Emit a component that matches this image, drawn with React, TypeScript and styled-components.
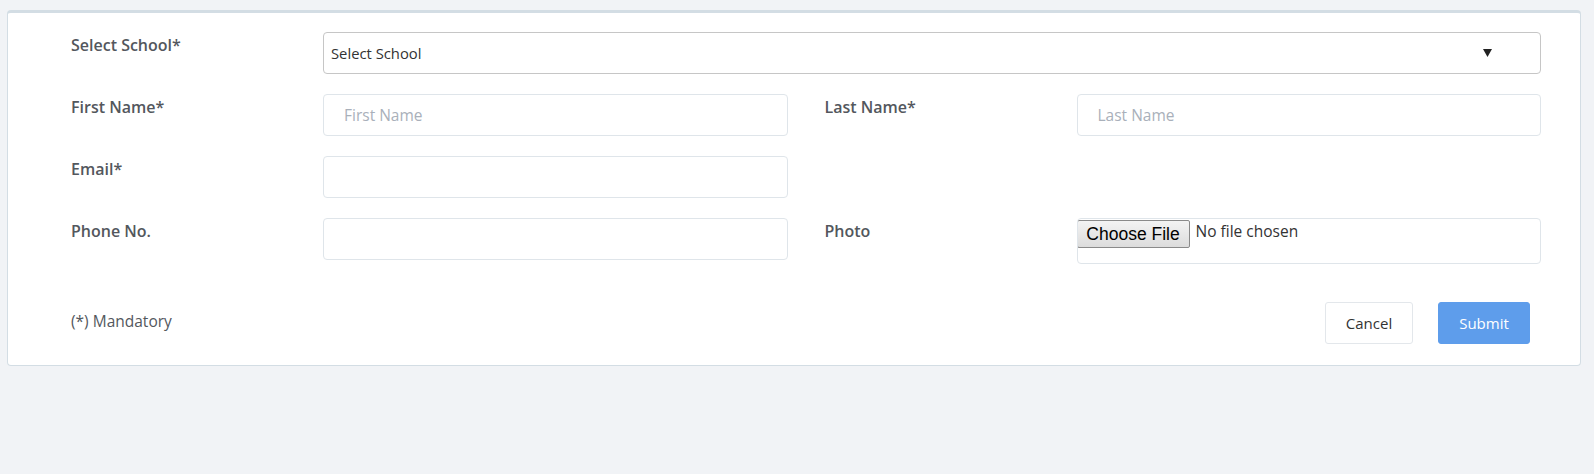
import styled, { createGlobalStyle } from 'styled-components'

const colors = {
  page: '#f1f3f6',
  white: '#ffffff',
  cardEdge: '#d3dde4',
  label: '#53575d',
  text: '#333333',
  field: '#dfe5ea',
  selectEdge: '#c6c6c6',
  placeholder: '#a9b0ba',
  blue: '#5e9deb',
}

const font = "'Open Sans', 'Noto Sans', sans-serif"

const GlobalStyle = createGlobalStyle`
  html, body {
    margin: 0;
    padding: 0;
    background: ${colors.page};
    font-family: ${font};
    height: 474px;
  }
`

const App = () => {
  return (
    <>
      <GlobalStyle />
      <Card>
        <Row>
          <Field $wide>
            <Label>Select School*</Label>
            <SelectWrap>
              <Select defaultValue=''>
                <option value=''>Select School</option>
              </Select>
              <Arrow>
                <svg width='9' height='8' viewBox='0 0 9 8'>
                  <path d='M0 0 H9 L4.5 8 Z' fill='#222' />
                </svg>
              </Arrow>
            </SelectWrap>
          </Field>
        </Row>
        <Row>
          <Field>
            <Label>First Name*</Label>
            <Input placeholder='First Name' />
          </Field>
          <Field>
            <Label>Last Name*</Label>
            <Input placeholder='Last Name' />
          </Field>
        </Row>
        <Row>
          <Field>
            <Label>Email*</Label>
            <Input />
          </Field>
        </Row>
        <Row>
          <Field>
            <Label>Phone No.</Label>
            <Input />
          </Field>
          <Field>
            <Label>Photo</Label>
            <FileInput type='file' />
          </Field>
        </Row>
        <Footer>
          <Note>(*) Mandatory</Note>
          <Actions>
            <Button $width={88}>Cancel</Button>
            <Button $width={92} $primary>
              Submit
            </Button>
          </Actions>
        </Footer>
      </Card>
    </>
  )
}

const Card = styled.div`
  margin: 10px 13px 0 7px;
  background: ${colors.white};
  border: 1px solid ${colors.cardEdge};
  border-top: 3px solid ${colors.cardEdge};
  border-radius: 4px;
  padding: 19px 39px 21px 63px;
`

const Row = styled.div`
  display: grid;
  grid-template-columns: 1fr 1fr;
  column-gap: 37px;
  align-items: start;
  margin-bottom: 20px;
`

const Field = styled.div<{ $wide?: boolean }>`
  display: grid;
  grid-template-columns: 252px 1fr;
  align-items: start;
  grid-column: ${(p) => (p.$wide ? '1 / -1' : 'auto')};
`

const Label = styled.label`
  font-size: 16px;
  font-weight: 600;
  color: ${colors.label};
  line-height: 22px;
  padding-top: 2px;
`

const SelectWrap = styled.div`
  position: relative;
`

const Select = styled.select`
  appearance: none;
  width: 100%;
  height: 42px;
  box-sizing: border-box;
  border: 1px solid ${colors.selectEdge};
  border-radius: 4px;
  background: ${colors.white};
  padding: 0 7px;
  font-family: ${font};
  font-size: 14.8px;
  color: ${colors.text};
  outline: none;
`

const Arrow = styled.span`
  position: absolute;
  top: 17px;
  right: 49px;
  display: flex;
  pointer-events: none;
`

const Input = styled.input`
  width: 100%;
  height: 42px;
  box-sizing: border-box;
  border: 1px solid ${colors.field};
  border-radius: 4px;
  padding: 0 20px;
  font-family: ${font};
  font-size: 15.5px;
  color: ${colors.text};
  outline: none;

  &::placeholder {
    color: ${colors.placeholder};
  }
`

const FileInput = styled.input`
  width: 100%;
  height: 46px;
  box-sizing: border-box;
  border: 1px solid ${colors.field};
  border-radius: 4px;
  padding: 1px 0 0 0;
  font-family: ${font};
  font-size: 15.5px;
  color: ${colors.text};
  display: block;

  &::file-selector-button {
    font-family: 'Liberation Sans', Arial, sans-serif;
    font-size: 17.5px;
    color: #000;
    background: linear-gradient(#f3f3f3, #dcdcdc);
    border: 1px solid #8a8a8a;
    border-radius: 2px;
    width: 113px;
    height: 28px;
    padding: 0;
    margin: 0 6px 0 -1px;
    vertical-align: top;
  }
`

const Footer = styled.div`
  display: flex;
  align-items: center;
  justify-content: space-between;
  margin-top: 38px;
  padding-right: 11px;
`

const Note = styled.span`
  font-size: 15.5px;
  color: ${colors.label};
  margin-top: -4px;
`

const Actions = styled.div`
  display: flex;
  gap: 25px;
`

const Button = styled.button<{ $primary?: boolean; $width: number }>`
  width: ${(p) => p.$width}px;
  height: 42px;
  padding: 0;
  border-radius: 3px;
  font-family: ${font};
  font-size: 15px;
  cursor: pointer;
  border: 1px solid ${(p) => (p.$primary ? colors.blue : '#e3e7eb')};
  background: ${(p) => (p.$primary ? colors.blue : colors.white)};
  color: ${(p) => (p.$primary ? colors.white : colors.text)};
`

export default App
